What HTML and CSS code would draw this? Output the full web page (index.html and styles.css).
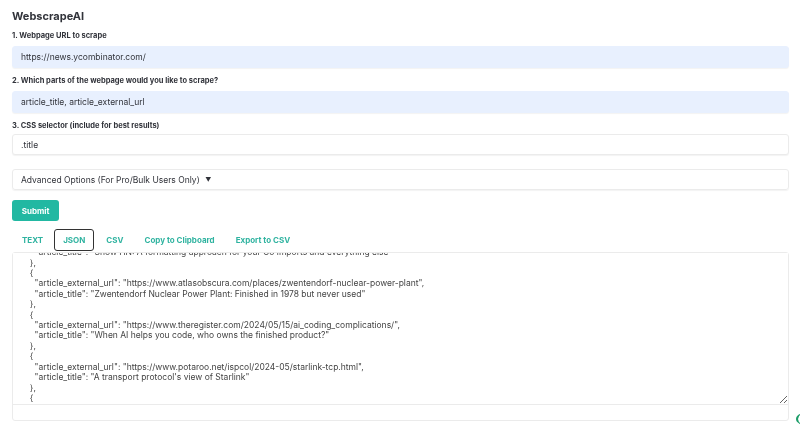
FILE: index.html
```html
<!DOCTYPE html>
<html lang="en">
<head>
    <meta charset="UTF-8">
    <meta name="viewport" content="width=device-width, initial-scale=1.0">
    <title>WebscrapeAI</title>
    <link rel="stylesheet" href="styles.css">
</head>
<body>
    <div class="app">
        <h1 class="app-title">WebscrapeAI</h1>

        <form class="scrape-form" onsubmit="return false;">
            <label class="field-label" for="url-input">1. Webpage URL to scrape</label>
            <input class="field-input filled" id="url-input" type="text" value="https://news.ycombinator.com/">

            <label class="field-label" for="fields-input">2. Which parts of the webpage would you like to scrape?</label>
            <input class="field-input filled" id="fields-input" type="text" value="article_title, article_external_url">

            <label class="field-label" for="selector-input">3. CSS selector (include for best results)</label>
            <input class="field-input short" id="selector-input" type="text" value=".title">

            <details class="advanced">
                <summary>Advanced Options (For Pro/Bulk Users Only) <span class="caret">&#9660;</span></summary>
            </details>

            <button class="submit-button" type="submit">Submit</button>
        </form>

        <div class="result-tabs">
            <button class="tab">TEXT</button>
            <button class="tab active">JSON</button>
            <button class="tab">CSV</button>
            <button class="tab">Copy to Clipboard</button>
            <button class="tab">Export to CSV</button>
        </div>

        <div class="result-box">
            <textarea class="result-output" id="result-output" readonly spellcheck="false"></textarea>
            <div class="result-footer"></div>
        </div>
    </div>

    <div class="help-bubble"></div>

    <script>
        // Sample output from the last scrape
        const results = [
            { url: "https://github.com/nicholasgasior/gsfmt", title: "Show HN: A formatting approach for your Go imports and everything else" },
            { url: "https://www.atlasobscura.com/places/zwentendorf-nuclear-power-plant", title: "Zwentendorf Nuclear Power Plant: Finished in 1978 but never used" },
            { url: "https://www.theregister.com/2024/05/15/ai_coding_complications/", title: "When AI helps you code, who owns the finished product?" },
            { url: "https://www.potaroo.net/ispcol/2024-05/starlink-tcp.html", title: "A transport protocol's view of Starlink" },
            { url: "https://blog.google/technology/ai/google-gemini-update-flash-ai-assistant-io-2024/", title: "Gemini Flash" },
            { url: "https://www.quantamagazine.org/the-physicist-who-bets-that-gravity-cant-be-quantized-20240515/", title: "The physicist who bets that gravity can't be quantized" },
            { url: "https://arstechnica.com/science/2024/05/the-oldest-known-star-map/", title: "The oldest known star map" },
            { url: "https://lwn.net/Articles/972604/", title: "Sourcehut says goodbye to Docker" },
            { url: "https://www.nature.com/articles/d41586-024-01411-4", title: "Plants can hear the sound of pollinators" },
            { url: "https://simonwillison.net/2024/May/15/chatgpt-in-4o-mode/", title: "ChatGPT in 4o mode is not the new features yet" },
            { url: "https://www.bbc.com/future/article/20240514-the-lost-art-of-cursive", title: "The lost art of cursive handwriting" },
            { url: "https://sqlite.org/draft/matrix.html", title: "SQLite: Feature matrix" },
            { url: "https://www.economist.com/science-and-technology/2024/05/15/tiny-robots", title: "Tiny robots that swim through blood vessels" },
            { url: "https://jvns.ca/blog/2024/05/12/some-notes-on-nixos/", title: "Some notes on NixOS" },
            { url: "https://www.wired.com/story/ilya-sutskever-leaves-openai/", title: "Ilya Sutskever is leaving OpenAI" },
            { url: "https://danluu.com/slow-device/", title: "How web bloat impacts users with slow devices" },
            { url: "https://www.righto.com/2024/05/pentium-multiplier.html", title: "The Pentium's multiplier, reverse engineered" },
            { url: "https://kottke.org/24/05/the-coolest-bridges", title: "The coolest bridges in the world" }
        ];

        const lines = ["["];
        results.forEach((item, i) => {
            lines.push("  {");
            lines.push(`    "article_external_url": "${item.url}",`);
            lines.push(`    "article_title": "${item.title}"`);
            lines.push(i < results.length - 1 ? "  }," : "  }");
        });
        lines.push("]");

        const output = document.getElementById('result-output');
        output.value = lines.join("\n");
        output.scrollTop = 43;
    </script>
</body>
</html>
```

FILE: styles.css
```css
* {
    margin: 0;
    padding: 0;
    box-sizing: border-box;
}

body {
    font-family: Inter, 'Noto Sans', sans-serif;
    background: white;
    color: #31333a;
    overflow: hidden;
}

.app {
    padding: 9px 11px 0 12px;
}

.app-title {
    font-size: 11px;
    font-weight: 700;
    line-height: 14px;
    color: #31333a;
    margin-bottom: 7px;
}

.scrape-form {
    display: flex;
    flex-direction: column;
}

.field-label {
    font-size: 7.5px;
    font-weight: 700;
    line-height: 12px;
    margin-bottom: 4px;
}

.field-input {
    height: 22px;
    padding: 0 8px;
    font-family: inherit;
    font-size: 8.5px;
    color: #31333a;
    background: white;
    border: 1px solid #ebebeb;
    border-radius: 3px;
    box-shadow: 0 1px 1px rgba(0, 0, 0, 0.05);
    outline: none;
    margin-bottom: 7px;
}

.field-input.filled {
    background: #e8f0fe;
    border-color: #e8f0fe;
}

.field-input.short {
    height: 21px;
    margin-top: -2px;
}

.advanced {
    margin-top: 7px;
    border: 1px solid #ebebeb;
    border-radius: 3px;
    box-shadow: 0 1px 1px rgba(0, 0, 0, 0.05);
}

.advanced summary {
    list-style: none;
    height: 19px;
    line-height: 19px;
    padding: 0 8px;
    font-size: 8.5px;
    cursor: pointer;
}

.advanced summary::-webkit-details-marker {
    display: none;
}

.caret {
    font-size: 6px;
    margin-left: 3px;
    vertical-align: 1px;
}

.submit-button {
    align-self: flex-start;
    margin-top: 10px;
    width: 47px;
    height: 21px;
    background: #22b8a2;
    color: white;
    border: none;
    border-radius: 3px;
    font-family: inherit;
    font-size: 8px;
    font-weight: 700;
    cursor: pointer;
}

.result-tabs {
    display: flex;
    margin-top: 8px;
}

.tab {
    height: 22px;
    padding: 0 9px;
    margin-right: 1px;
    background: none;
    border: 1.5px solid transparent;
    border-radius: 3px;
    color: #2fb3a0;
    font-family: inherit;
    font-size: 8px;
    font-weight: 700;
    cursor: pointer;
}

.tab.active {
    border-color: #333;
    padding: 0 8px;
    margin-right: 2px;
}

.result-box {
    margin-top: 1px;
    border: 1px solid #ebebeb;
    border-radius: 3px;
}

.result-output {
    display: block;
    width: 100%;
    height: 152px;
    padding: 6px 12px;
    font-family: inherit;
    font-size: 8.5px;
    line-height: 10.4px;
    color: #444;
    border: none;
    border-bottom: 1px solid #ebebeb;
    outline: none;
    resize: vertical;
    white-space: pre;
    overflow-x: hidden;
}

.result-output::-webkit-scrollbar {
    width: 9px;
}

.result-output::-webkit-scrollbar-track {
    background: #f1f1f1;
}

.result-output::-webkit-scrollbar-thumb {
    background: #c1c1c1;
}

.result-output::-webkit-scrollbar-button:single-button {
    display: block;
    height: 9px;
    background-color: #f1f1f1;
}

.result-output::-webkit-scrollbar-button:single-button:vertical:decrement {
    background-image: linear-gradient(to top right, transparent 50%, #505050 50%), linear-gradient(to top left, transparent 50%, #505050 50%);
    background-size: 2px 2px;
    background-position: 2.5px 4px, 4.5px 4px;
    background-repeat: no-repeat;
}

.result-output::-webkit-scrollbar-button:single-button:vertical:increment {
    background-image: linear-gradient(to bottom right, transparent 50%, #505050 50%), linear-gradient(to bottom left, transparent 50%, #505050 50%);
    background-size: 2px 2px;
    background-position: 2.5px 3px, 4.5px 3px;
    background-repeat: no-repeat;
}

.result-footer {
    height: 15px;
}

.help-bubble {
    position: fixed;
    right: -22px;
    bottom: 12px;
    width: 26px;
    height: 14px;
    border-left: 2px solid #1e9e6a;
    border-radius: 50%;
}
```
